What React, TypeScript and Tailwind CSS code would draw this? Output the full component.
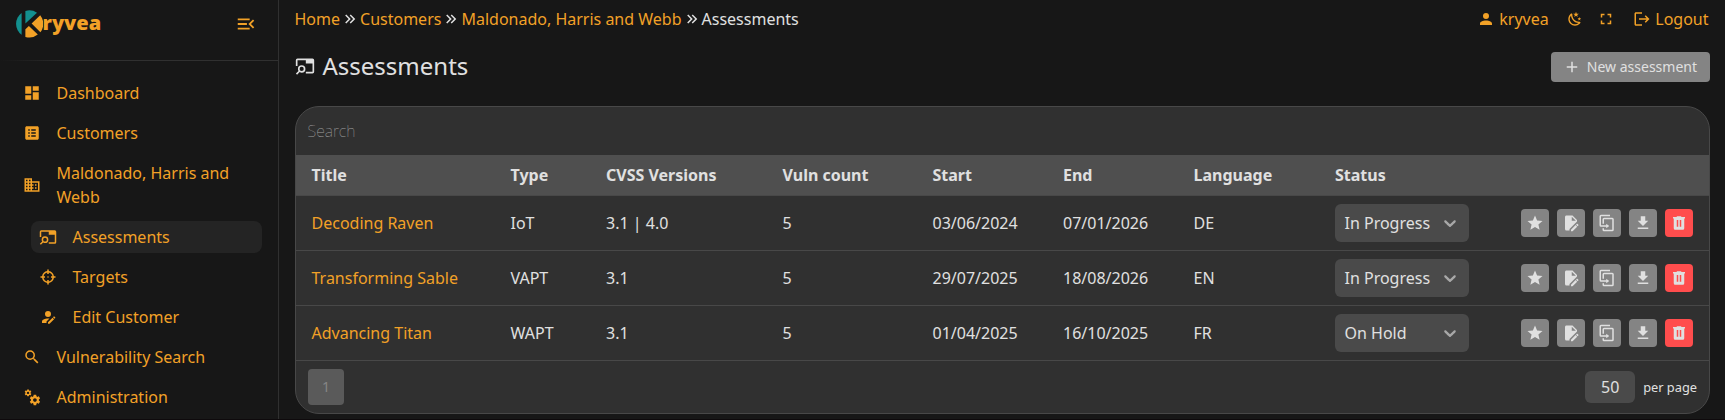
import React from "react";

const paths = {
  menuOpen:
    "M21,15.61L19.59,17L14.58,12L19.59,7L21,8.39L17.44,12L21,15.61M3,6H16V8H3V6M3,13V11H13V13H3M3,18V16H16V18H3Z",
  dashboard: "M13,3V9H21V3M13,21H21V11H13M3,21H11V15H3M3,13H11V3H3V13Z",
  listBox:
    "M19 3H5C3.9 3 3 3.9 3 5V19C3 20.1 3.9 21 5 21H19C20.1 21 21 20.1 21 19V5C21 3.9 20.1 3 19 3M7 7H9V9H7V7M7 11H9V13H7V11M7 15H9V17H7V15M17 17H11V15H17V17M17 13H11V11H17V13M17 9H11V7H17V9Z",
  domain:
    "M18,15H16V17H18M18,11H16V13H18M20,19H12V17H14V15H12V13H14V11H12V9H20M10,7H8V5H10M10,11H8V9H10M10,15H8V13H10M10,19H8V17H10M6,7H4V5H6M6,11H4V9H6M6,15H4V13H6M6,19H4V17H6M12,7V3H2V21H22V7H12Z",
  tabSearch:
    "M21,3H3A2,2 0 0,0 1,5V12H3V5H13V9H21V19H13V21H21A2,2 0 0,0 23,19V5A2,2 0 0,0 21,3M8,11A4.5,4.5 0 0,0 3.5,15.5C3.5,16.4 3.75,17.2 4.2,17.9L1.1,21L2.5,22.4L5.6,19.3C6.3,19.75 7.1,20 8,20A4.5,4.5 0 0,0 8,11M8,13A2.5,2.5 0 0,1 8,18A2.5,2.5 0 0,1 8,13Z",
  target:
    "M11,2V4.07C7.38,4.53 4.53,7.38 4.07,11H2V13H4.07C4.53,16.62 7.38,19.47 11,19.93V22H13V19.93C16.62,19.47 19.47,16.62 19.93,13H22V11H19.93C19.47,7.38 16.62,4.53 13,4.07V2M11,6.08V8H13V6.09C15.5,6.5 17.5,8.5 17.92,11H16V13H17.91C17.5,15.5 15.5,17.5 13,17.92V16H11V17.91C8.5,17.5 6.5,15.5 6.08,13H8V11H6.09C6.5,8.5 8.5,6.5 11,6.08M12,11A1,1 0 0,0 11,12A1,1 0 0,0 12,13A1,1 0 0,0 13,12A1,1 0 0,0 12,11Z",
  accountEdit:
    "M21.7,13.35L20.7,14.35L18.65,12.3L19.65,11.3C19.86,11.09 20.21,11.09 20.42,11.3L21.7,12.58C21.91,12.79 21.91,13.14 21.7,13.35M12,18.94L18.06,12.88L20.11,14.93L14.06,21H12V18.94M12,14C7.58,14 4,15.79 4,18V20H10V18.11L14,14.11C13.34,14.03 12.67,14 12,14M12,4A4,4 0 0,0 8,8A4,4 0 0,0 12,12A4,4 0 0,0 16,8A4,4 0 0,0 12,4Z",
  magnify:
    "M9.5,3A6.5,6.5 0 0,1 16,9.5C16,11.11 15.41,12.59 14.44,13.73L14.71,14H15.5L20.5,19L19,20.5L14,15.5V14.71L13.73,14.44C12.59,15.41 11.11,16 9.5,16A6.5,6.5 0 0,1 3,9.5A6.5,6.5 0 0,1 9.5,3M9.5,5C7,5 5,7 5,9.5C5,12 7,14 9.5,14C12,14 14,12 14,9.5C14,7 12,5 9.5,5Z",
  cogs:
    "M15.9,18.45C17.25,18.45 18.35,17.35 18.35,16C18.35,14.65 17.25,13.55 15.9,13.55C14.54,13.55 13.45,14.65 13.45,16C13.45,17.35 14.54,18.45 15.9,18.45M21.1,16.68L22.58,17.84C22.71,17.95 22.75,18.13 22.66,18.29L21.26,20.71C21.17,20.86 21,20.92 20.83,20.86L19.09,20.16C18.73,20.44 18.33,20.67 17.91,20.85L17.64,22.7C17.62,22.87 17.47,23 17.3,23H14.5C14.32,23 14.18,22.87 14.15,22.7L13.89,20.85C13.46,20.67 13.07,20.44 12.71,20.16L10.96,20.86C10.81,20.92 10.62,20.86 10.54,20.71L9.14,18.29C9.05,18.13 9.09,17.95 9.22,17.84L10.7,16.68L10.65,16L10.7,15.31L9.22,14.16C9.09,14.05 9.05,13.86 9.14,13.71L10.54,11.29C10.62,11.13 10.81,11.07 10.96,11.13L12.71,11.84C13.07,11.56 13.46,11.32 13.89,11.15L14.15,9.29C14.18,9.13 14.32,9 14.5,9H17.3C17.47,9 17.62,9.13 17.64,9.29L17.91,11.15C18.33,11.32 18.73,11.56 19.09,11.84L20.83,11.13C21,11.07 21.17,11.13 21.26,11.29L22.66,13.71C22.75,13.86 22.71,14.05 22.58,14.16L21.1,15.31L21.15,16L21.1,16.68M6.69,8.07C7.56,8.07 8.26,7.37 8.26,6.5C8.26,5.63 7.56,4.92 6.69,4.92A1.58,1.58 0 0,0 5.11,6.5C5.11,7.37 5.82,8.07 6.69,8.07M10.03,6.94L11,7.68C11.07,7.75 11.09,7.87 11.03,7.97L10.13,9.53C10.08,9.63 9.96,9.67 9.86,9.63L8.74,9.18L8,9.62L7.81,10.81C7.79,10.92 7.7,11 7.59,11H5.79C5.67,11 5.58,10.92 5.56,10.81L5.4,9.62L4.64,9.18L3.52,9.63C3.41,9.67 3.3,9.63 3.24,9.53L2.34,7.97C2.28,7.87 2.31,7.75 2.39,7.68L3.34,6.94L3.31,6.5L3.34,6.06L2.39,5.32C2.31,5.25 2.28,5.13 2.34,5.03L3.24,3.47C3.3,3.37 3.41,3.33 3.52,3.37L4.63,3.82L5.4,3.38L5.56,2.19C5.58,2.08 5.67,2 5.79,2H7.59C7.7,2 7.79,2.08 7.81,2.19L8,3.38L8.74,3.82L9.86,3.37C9.96,3.33 10.08,3.37 10.13,3.47L11.03,5.03C11.09,5.13 11.07,5.25 11,5.32L10.03,6.06L10.06,6.5L10.03,6.94Z",
  chevronDouble:
    "M5.59,7.41L7,6L13,12L7,18L5.59,16.59L10.17,12L5.59,7.41M11.59,7.41L13,6L19,12L13,18L11.59,16.59L16.17,12L11.59,7.41Z",
  account:
    "M12,4A4,4 0 0,1 16,8A4,4 0 0,1 12,12A4,4 0 0,1 8,8A4,4 0 0,1 12,4M12,14C16.42,14 20,15.79 20,18V20H4V18C4,15.79 7.58,14 12,14Z",
  night:
    "M17.75,4.09L15.22,6.03L16.13,9.09L13.5,7.28L10.87,9.09L11.78,6.03L9.25,4.09L12.44,4L13.5,1L14.56,4L17.75,4.09M21.25,11L19.61,12.25L20.2,14.23L18.5,13.06L16.8,14.23L17.39,12.25L15.75,11L17.81,10.95L18.5,9L19.19,10.95L21.25,11M18.97,15.95C19.8,15.87 20.69,17.05 20.16,17.8C19.84,18.25 19.5,18.67 19.08,19.07C15.17,23 8.84,23 4.94,19.07C1.03,15.17 1.03,8.83 4.94,4.93C5.34,4.53 5.76,4.17 6.21,3.85C6.96,3.32 8.14,4.21 8.06,5.04C7.79,7.9 8.75,10.87 10.95,13.06C13.14,15.26 16.1,16.22 18.97,15.95M17.33,17.97C14.5,17.81 11.7,16.64 9.53,14.5C7.36,12.31 6.2,9.5 6.04,6.68C3.23,9.82 3.34,14.64 6.35,17.66C9.37,20.67 14.19,20.78 17.33,17.97Z",
  fullscreen:
    "M5,5H10V7H7V10H5V5M14,5H19V10H17V7H14V5M17,14H19V19H14V17H17V14M10,17V19H5V14H7V17H10Z",
  logout:
    "M17 7L15.59 8.41L18.17 11H8V13H18.17L15.59 15.58L17 17L22 12M4 5H12V3H4C2.9 3 2 3.9 2 5V19C2 20.1 2.9 21 4 21H12V19H4V5Z",
  plus: "M19,13H13V19H11V13H5V11H11V5H13V11H19V13Z",
  star: "M12,17.27L18.18,21L16.54,13.97L22,9.24L14.81,8.62L12,2L9.19,8.62L2,9.24L7.45,13.97L5.82,21L12,17.27Z",
  fileEdit:
    "M6,2C4.89,2 4,2.89 4,4V20A2,2 0 0,0 6,22H10V20.09L20,10.09V8L14,2H6M13,3.5L18.5,9H13V3.5M20.15,13C20,13 19.86,13.05 19.75,13.16L18.73,14.18L20.82,16.26L21.84,15.25C22.05,15.03 22.05,14.67 21.84,14.46L20.54,13.16C20.43,13.05 20.29,13 20.15,13M18.14,14.77L12,20.92V23H14.08L20.23,16.85L18.14,14.77Z",
  duplicate:
    "M11,17H4A2,2 0 0,1 2,15V3A2,2 0 0,1 4,1H16V3H4V15H11V13L15,16L11,19V17M19,21V7H8V13H6V7A2,2 0 0,1 8,5H19A2,2 0 0,1 21,7V21A2,2 0 0,1 19,23H8A2,2 0 0,1 6,21V19H8V21H19Z",
  download: "M5,20H19V18H5M19,9H15V3H9V9H5L12,16L19,9Z",
  trash:
    "M9,3V4H4V6H5V19A2,2 0 0,0 7,21H17A2,2 0 0,0 19,19V6H20V4H15V3H9M9,8H11V17H9V8M13,8H15V17H13V8Z",
};

type IconName = keyof typeof paths;

function Icon({ name, size = 18 }: { name: IconName; size?: number }) {
  return (
    <svg viewBox="0 0 24 24" width={size} height={size} fill="currentColor" className="shrink-0">
      <path d={paths[name]} />
    </svg>
  );
}

function Logo() {
  return (
    <svg viewBox="0 0 27 28" width="27" height="28" className="shrink-0">
      <path d="M5.6 2.9A13.5 13.5 0 0 0 5.6 24.7Z" fill="#13908f" />
      <path d="M9.4 1A13.5 13.5 0 0 1 21 2.8L9.4 13.6Z" fill="#13908f" />
      <path d="M24.2 5.3A13.5 13.5 0 0 1 24.4 22.2L15.6 13.6Z" fill="#f2a127" />
      <path d="M12.9 16L21.8 24.6A13.5 13.5 0 0 1 9.4 26.9V19.2Z" fill="#f2a127" />
    </svg>
  );
}

const nav: { icon: IconName; label: string; sub?: boolean; active?: boolean }[] = [
  { icon: "dashboard", label: "Dashboard" },
  { icon: "listBox", label: "Customers" },
  { icon: "domain", label: "Maldonado, Harris and Webb" },
  { icon: "tabSearch", label: "Assessments", sub: true, active: true },
  { icon: "target", label: "Targets", sub: true },
  { icon: "accountEdit", label: "Edit Customer", sub: true },
  { icon: "magnify", label: "Vulnerability Search" },
  { icon: "cogs", label: "Administration" },
];

function Sidebar() {
  return (
    <aside className="flex w-[279px] shrink-0 flex-col border-r border-[#303030] text-[#f2a127]">
      <div className="flex h-[60px] shrink-0 items-start justify-between pl-[15.5px] pr-[21px] pt-2.5">
        <div className="flex items-center">
          <Logo />
          <span className="-mt-[3px] text-[20px] leading-[27px] font-black">ryvea</span>
        </div>
        <div className="pt-[3px]">
          <Icon name="menuOpen" size={22} />
        </div>
      </div>
      <div className="h-px shrink-0 bg-linear-to-r from-transparent to-[#303030] to-30%" />
      <nav className="flex flex-col gap-2 pt-4 pr-4 pl-[15px]">
        {nav.map((n) => (
          <a
            key={n.label}
            className={`flex items-center gap-[15.5px] rounded-lg px-2 py-1 leading-6 ${n.sub ? "ml-4" : ""} ${
              n.active ? "bg-[#242424]" : ""
            }`}
          >
            <Icon name={n.icon} />
            <span>{n.label}</span>
          </a>
        ))}
      </nav>
    </aside>
  );
}

function TopBar() {
  return (
    <div className="flex h-[38px] items-center justify-between text-[#f2a127]">
      <div className="-ml-[0.5px] flex items-center">
        <a>Home</a>
        <span className="ml-px flex text-[#e0e0e0]"><Icon name="chevronDouble" /></span>
        <a className="ml-px">Customers</a>
        <span className="ml-px flex text-[#e0e0e0]"><Icon name="chevronDouble" /></span>
        <a className="ml-px">Maldonado, Harris and Webb</a>
        <span className="ml-px flex text-[#e0e0e0]"><Icon name="chevronDouble" /></span>
        <span className="ml-px text-[#e0e0e0]">Assessments</span>
      </div>
      <div className="flex items-center pr-[1.5px]">
        <a className="flex items-center gap-1"><Icon name="account" />kryvea</a>
        <span className="ml-[18.5px]"><Icon name="night" size={16} /></span>
        <span className="ml-[14px]"><Icon name="fullscreen" /></span>
        <a className="ml-[18px] flex items-center gap-1"><Icon name="logout" />Logout</a>
      </div>
    </div>
  );
}

const rows = [
  ["Decoding Raven", "IoT", "3.1 | 4.0", "5", "03/06/2024", "07/01/2026", "DE", "In Progress"],
  ["Transforming Sable", "VAPT", "3.1", "5", "29/07/2025", "18/08/2026", "EN", "In Progress"],
  ["Advancing Titan", "WAPT", "3.1", "5", "01/04/2025", "16/10/2025", "FR", "On Hold"],
];

const headers = ["Title", "Type", "CVSS Versions", "Vuln count", "Start", "End", "Language", "Status", ""];

const cellInset = [
  "pl-[15.5px]",
  "pl-[15.5px]",
  "pl-4",
  "pl-[15.5px]",
  "pl-[15.5px]",
  "pl-4",
  "pl-[15.5px]",
  "pl-4",
  "pl-4",
];

const actions: IconName[] = ["star", "fileEdit", "duplicate", "download", "trash"];

function StatusSelect({ value }: { value: string }) {
  return (
    <div className="flex h-[38px] w-[134px] items-center justify-between rounded-md bg-[#4a4a4a] pr-[9px] pl-[9.5px]">
      <span>{value}</span>
      <svg viewBox="0 0 20 20" width="20" height="20" className="fill-[#a8a8a8]">
        <path d="M4.516 7.548c0.436-0.446 1.043-0.481 1.576 0l3.908 3.747 3.908-3.747c0.533-0.481 1.141-0.446 1.574 0 0.436 0.445 0.408 1.197 0 1.615-0.406 0.418-4.695 4.502-4.695 4.502-0.217 0.223-0.502 0.335-0.787 0.335s-0.57-0.112-0.789-0.335c0 0-4.287-4.084-4.695-4.502s-0.436-1.17 0-1.615z" />
      </svg>
    </div>
  );
}

function AssessmentTable() {
  return (
    <div className="flex h-[308px] flex-col overflow-hidden rounded-3xl border border-[#484848] bg-[#303030]">
      <div className="flex h-12 shrink-0 items-center pl-[11.5px] font-thin text-[#a0a0a0]">Search</div>
      <table className="w-full table-fixed border-separate border-spacing-0 text-left">
        <colgroup>
          <col className="w-[199px]" />
          <col className="w-[95px]" />
          <col className="w-[177px]" />
          <col className="w-[150px]" />
          <col className="w-[130px]" />
          <col className="w-[131px]" />
          <col className="w-[141px]" />
          <col className="w-[166px]" />
          <col />
        </colgroup>
        <thead>
          <tr className="h-[41px] bg-[#4f4f4f]">
            {headers.map((h, i) => (
              <th key={h} className={`border-b border-[#484848] py-0 pr-4 font-bold ${cellInset[i]}`}>
                {h}
              </th>
            ))}
          </tr>
        </thead>
        <tbody>
          {rows.map((r) => (
            <tr key={r[0]} className="h-[55px]">
              {r.map((c, i) => (
                <td
                  key={i}
                  className={`border-b border-[#484848] py-0 pr-4 ${cellInset[i]} ${
                    i === 0 ? "text-[#f2a127]" : ""
                  }`}
                >
                  {i === 7 ? <StatusSelect value={c} /> : c}
                </td>
              ))}
              <td className="border-b border-[#484848] px-4 py-0">
                <div className="flex justify-end gap-2">
                  {actions.map((a) => (
                    <button
                      key={a}
                      className={`flex size-7 items-center justify-center rounded ${
                        a === "trash" ? "bg-[#ff4d4d]" : "bg-[#848484]"
                      }`}
                    >
                      <Icon name={a} />
                    </button>
                  ))}
                </div>
              </td>
            </tr>
          ))}
        </tbody>
      </table>
      <div className="flex flex-1 items-center justify-between pr-3 pl-3">
        <button className="size-9 rounded bg-[#5a5a5a] text-sm text-[#868686]">1</button>
        <div className="flex items-center gap-2">
          <div className="flex h-8 w-[50px] items-center justify-center rounded-md bg-[#4a4a4a]">50</div>
          <span className="text-[12.8px]">per page</span>
        </div>
      </div>
    </div>
  );
}

export default function App() {
  return (
    <div className="flex h-[420px] overflow-hidden border-b border-[#0e0a0c] bg-[#171717] font-['Noto_Sans',sans-serif] text-base leading-6 text-[#e0e0e0]">
      <Sidebar />
      <main className="flex flex-1 flex-col pr-[15px] pl-4">
        <TopBar />
        <div className="flex h-[68px] items-start justify-between pt-3.5">
          <h1 className="-mt-px flex h-[30px] items-center gap-[7.5px] text-2xl">
            <Icon name="tabSearch" size={20} />
            Assessments
          </h1>
          <button className="flex h-[30px] w-[159px] items-center justify-end gap-[6px] rounded bg-[#848484] pr-[13px] text-sm">
            <Icon name="plus" />
            New assessment
          </button>
        </div>
        <AssessmentTable />
      </main>
    </div>
  );
}
